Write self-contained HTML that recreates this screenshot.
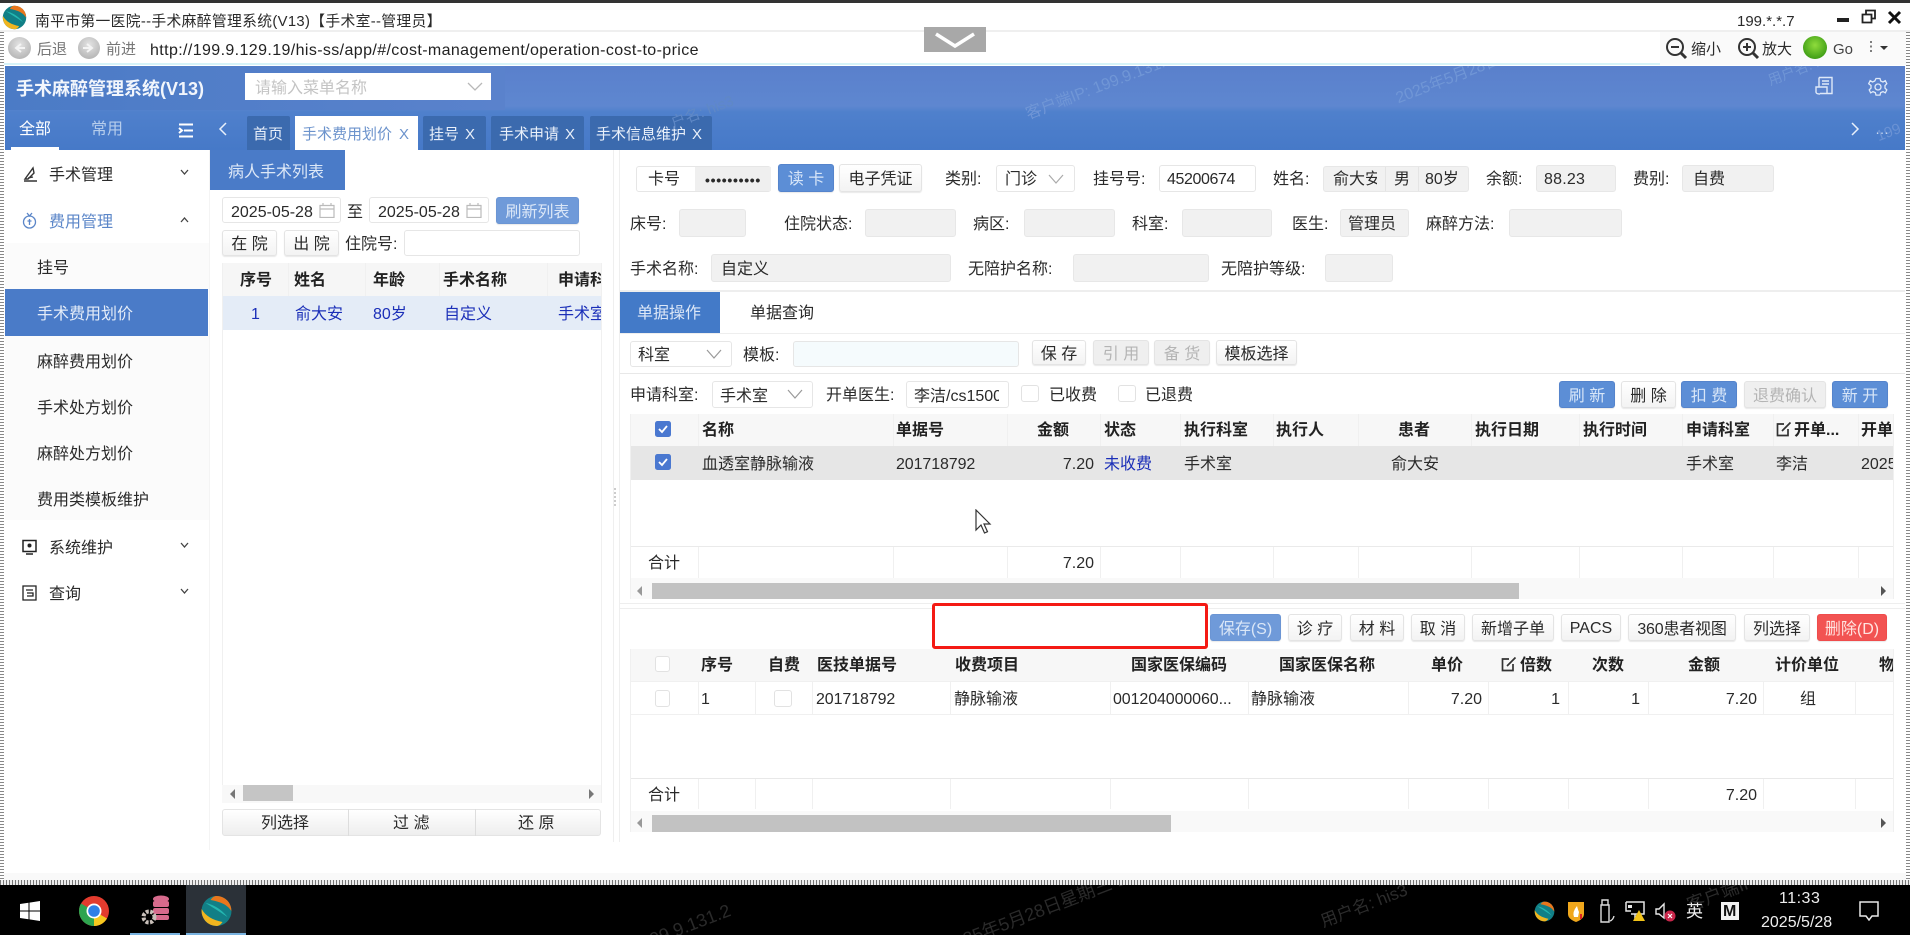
<!DOCTYPE html>
<html lang="zh-CN"><head><meta charset="utf-8"><title>手术麻醉管理系统</title>
<style>
html,body{margin:0;padding:0;width:1910px;height:935px;overflow:hidden;background:#fff}
body{position:relative;font-family:"Liberation Sans","Noto Sans CJK SC",sans-serif;font-size:16px;color:#2a2a2a;filter:blur(.35px)}
div,span,svg{box-sizing:border-box}
.t{position:absolute;white-space:nowrap;line-height:20px;height:20px;margin-top:3.5px}
.s{font-size:15px}
.th{font-weight:700;color:#222}
.w{color:#fff}
.bl{color:#1b2fb8}
.r{text-align:right}
.c{overflow:hidden}
.a{position:absolute}
.b{position:absolute;border:1px solid #e6e6e6;border-radius:3px;background:#fff}
.g{background:#f1f1f1;border-color:#e7e7e7}
.btn{position:absolute;display:flex;align-items:center;justify-content:center;border:1px solid #e4e4e4;border-radius:3px;background:linear-gradient(#fff,#f3f3f3);white-space:nowrap;box-shadow:0 1px 1px #e8e8e8;padding-bottom:1.5px}
.pr{background:#5c8ed6;border-color:#5584cc;color:#d8e6f8}
.lb{background:#6f9ad9;border-color:#6b95d4;color:#dbe7f7}
.dis{background:#efefef;color:#b4b4b4}
.tab{position:absolute;top:116px;height:34px;background:#3b6aae;border-radius:2px 2px 0 0}
.ck{position:absolute;border:1px solid #e2e2e2;border-radius:3px;background:#fff}
.wm{position:absolute;white-space:nowrap;font-size:17px;transform:rotate(-21deg);transform-origin:left bottom}
</style></head>
<body>
<svg width="0" height="0" style="position:absolute"><symbol id="lg" viewBox="0 0 32 32"><circle cx="16" cy="16" r="15" fill="#127f86"/><path d="M16 1a15 15 0 0 1 13 7.500c1 2 2 4.500 1.800 7.500C27 10 21 7 10 5 12 2 14 1 16 1z" fill="#e9761c"/><path d="M1.200 14C5 21 12 25 22 27c-2 3-4 4-6 4A15 15 0 0 1 1.200 14z" fill="#f1b51f"/><path d="M5 8c6 1 15 5 22 14-3-2-12-8-22-14z" fill="#23b7b1"/></symbol></svg>

<!-- window chrome -->
<div class="a" style="left:0;top:0;width:1910px;height:3px;background:#333"></div>
<div class="a" style="left:0;top:30px;width:1910px;height:2px;background:#efefef"></div>
<div class="a" style="left:0;top:63px;width:1660px;height:2px;background:#d6f3f8"></div>
<div class="a" style="left:1660px;top:32px;width:246px;height:33px;background:#fafafa"></div>
<svg class="a" style="left:2px;top:5px" width="25" height="25"><use href="#lg"/></svg>
<div class="t" style="left:35px;top:8px;font-size:14.8px;letter-spacing:.33px">南平市第一医院--手术麻醉管理系统(V13)【手术室--管理员】</div>
<div class="a" style="left:8px;top:37px;width:23px;height:22px;border-radius:50%;background:radial-gradient(circle at 50% 35%,#e4e4e4,#a9a9a9)"></div>
<svg class="a" style="left:8px;top:37px" width="23" height="22"><path d="M13 7l-5 4 5 4M8 11h9" fill="none" stroke="#f4f4f4" stroke-width="2"/></svg>
<div class="t" style="left:37px;top:36px;font-size:15px;color:#777">后退</div>
<div class="a" style="left:78px;top:37px;width:22px;height:22px;border-radius:50%;background:radial-gradient(circle at 50% 35%,#e4e4e4,#a9a9a9)"></div>
<svg class="a" style="left:78px;top:37px" width="22" height="22"><path d="M9 7l5 4-5 4M14 11H5" fill="none" stroke="#f4f4f4" stroke-width="2"/></svg>
<div class="t" style="left:106px;top:36px;font-size:15px;color:#777">前进</div>
<div class="t" style="left:150px;top:37px;font-size:16px;letter-spacing:.385px;color:#222">http://199.9.129.19/his-ss/app/#/cost-management/operation-cost-to-price</div>
<div class="a" style="left:924px;top:27px;width:62px;height:25px;background:#a8a8a8"></div>
<svg class="a" style="left:924px;top:27px" width="62" height="25"><path d="M12 7l19 12L50 7" fill="none" stroke="#fff" stroke-width="3.500"/></svg>
<div class="t" style="left:1737px;top:8px;font-size:15px">199.*.*.7</div>
<div class="a" style="left:1837px;top:18px;width:12px;height:4px;background:#222"></div>
<svg class="a" style="left:1860px;top:8px" width="46" height="18"><path d="M2.500 6.500h9v8h-9zM6 6V2.500h9v8h-3" fill="none" stroke="#222" stroke-width="1.800"/><path d="M29 4l11 11M40 4L29 15" stroke="#111" stroke-width="3" fill="none"/></svg>
<svg class="a" style="left:1664px;top:37px" width="100" height="23"><g fill="none" stroke="#333" stroke-width="2"><circle cx="11" cy="10" r="8"/><path d="M17 16l5 5" stroke-width="3"/><path d="M7 10h8"/><circle cx="83" cy="10" r="8"/><path d="M89 16l5 5" stroke-width="3"/><path d="M79 10h8M83 6v8"/></g></svg>
<div class="t" style="left:1691px;top:36px;font-size:15px">缩小</div>
<div class="t" style="left:1762px;top:36px;font-size:15px">放大</div>
<div class="a" style="left:1803px;top:36px;width:24px;height:23px;border-radius:50%;background:radial-gradient(circle at 50% 40%,#8fdc3c,#3f9e16 75%)"></div>
<div class="t" style="left:1833px;top:36px;font-size:15px;color:#444">Go</div>
<svg class="a" style="left:1866px;top:40px" width="24" height="14"><path d="M5 1v2M5 5.500v2M5 10v2" stroke="#555" stroke-width="1.500"/><path d="M14 6h8l-4 4z" fill="#333"/></svg>

<!-- dotted borders -->
<div class="a" style="left:0;top:32px;width:4px;height:853px;background:repeating-linear-gradient(#888 0 1px,#fff 1px 3px)"></div>
<div class="a" style="left:1906px;top:32px;width:4px;height:853px;background:repeating-linear-gradient(#888 0 1px,#fff 1px 3px)"></div>
<div class="a" style="left:4px;top:873px;width:1902px;height:7px;background:#f9f9f9"></div>
<div class="a" style="left:0;top:880px;width:1910px;height:5px;background:repeating-linear-gradient(90deg,#777 0 1px,#eee 1px 3px)"></div>

<!-- header -->
<div class="a" style="left:5px;top:66px;width:1900px;height:84px;background:linear-gradient(#5a80cc,#5e87d0 40px,#4f80cc 46px,#4679c8)"></div>
<div class="a" style="left:5px;top:66px;width:500px;height:44px;background:linear-gradient(90deg,#4b7bc6,#5a82cc)"></div>
<div class="a" style="left:0;top:66px;width:1905px;height:84px;overflow:hidden">
<div class="wm" style="left:1030px;top:34px;font-size:16px;color:#7096d6">客户端IP: 199.9.131.2</div>
<div class="wm" style="left:1400px;top:18px;color:#7096d6;font-size:16px">2025年5月28日星期三</div>
<div class="wm" style="left:1772px;top:4px;color:#7096d6;font-size:14px">用户名: his3</div>
<div class="wm" style="left:1880px;top:62px;color:#6a92d4;font-size:15px">199</div>
</div>
<div class="t" style="left:16px;top:75px;font-size:18px;font-weight:700;color:#f2f6fc">手术麻醉管理系统(V13)</div>
<div class="a" style="left:245px;top:73px;width:246px;height:27px;background:#fff"></div>
<div class="t" style="left:255px;top:75px;color:#c4c4c4">请输入菜单名称</div>
<svg class="a" style="left:467px;top:82px" width="16" height="10"><path d="M1 1l7 7 7-7" fill="none" stroke="#b8b8b8" stroke-width="1.300"/></svg>
<div class="t w" style="left:19px;top:116px">全部</div>
<div class="t" style="left:91px;top:116px;color:#b6cdec">常用</div>
<div class="a" style="left:11px;top:147px;width:48px;height:3px;background:#fff"></div>
<svg class="a" style="left:178px;top:123px" width="16" height="15"><path d="M1 1.500h14M6 7.500h9M1 13.500h14M1 5l3 2.500L1 10" fill="none" stroke="#fff" stroke-width="2"/></svg>
<svg class="a" style="left:218px;top:122px" width="10" height="14"><path d="M8 1L2 7l6 6" fill="none" stroke="#e8f0fb" stroke-width="1.500"/></svg>
<div class="tab" style="left:247px;width:43px"></div>
<div class="t s" style="left:253px;top:121px;color:#e9f0fa">首页</div>
<div class="a" style="left:295px;top:116px;width:123px;height:34px;background:#fff"></div>
<div class="t s" style="left:302px;top:121px;color:#6c93cc">手术费用划价</div>
<div class="t s" style="left:399px;top:121px;color:#6c93cc">X</div>
<div class="tab" style="left:423px;width:63px"></div>
<div class="t s" style="left:429px;top:121px;color:#e9f0fa">挂号</div>
<div class="t s" style="left:465px;top:121px;color:#e9f0fa">X</div>
<div class="tab" style="left:491px;width:93px"></div>
<div class="t s" style="left:499px;top:121px;color:#e9f0fa">手术申请</div>
<div class="t s" style="left:565px;top:121px;color:#e9f0fa">X</div>
<div class="tab" style="left:590px;width:122px"></div>
<div class="t s" style="left:596px;top:121px;color:#e9f0fa">手术信息维护</div>
<div class="t s" style="left:692px;top:121px;color:#e9f0fa">X</div>
<div class="wm" style="left:675px;top:112px;color:#5f88c6;font-size:15px">户名: his3</div>
<svg class="a" style="left:1850px;top:122px" width="10" height="14"><path d="M2 1l6 6-6 6" fill="none" stroke="#e8f0fb" stroke-width="1.500"/></svg>
<div class="t" style="left:1875px;top:115px;color:#c8d8f0;font-size:14px">…</div>
<svg class="a" style="left:1814px;top:76px" width="22" height="21"><path d="M5 1.500h13v16H6M5 1.500V11H2v5q0 2 4 2M5 11h8v6M8 5h7M8 8h7" fill="none" stroke="#dfe9f8" stroke-width="1.400"/></svg>
<svg class="a" style="left:1868px;top:77px" width="20" height="20"><path d="M8 1.500h4l.7 2.500 2.300 1 2.300-1.300 1.500 3-1.800 1.800v2.600l1.800 1.800-1.500 3-2.300-1.300-2.300 1-.7 2.500H8l-.7-2.500-2.300-1-2.300 1.300-1.500-3 1.800-1.800V8.500L.7 6.700l1.500-3L4.500 5l2.300-1z" fill="none" stroke="#dfe9f8" stroke-width="1.300"/><circle cx="10" cy="10" r="3" fill="none" stroke="#dfe9f8" stroke-width="1.300"/></svg>

<!-- sidebar -->
<div class="a" style="left:209px;top:150px;width:1px;height:700px;background:#f4f4f4"></div>
<svg class="a" style="left:22px;top:166px" width="16" height="16"><path d="M2 15h13M3 13L11 2l1 5-6 6zM6 12l5-1" fill="none" stroke="#333" stroke-width="1.400"/></svg>
<div class="t" style="left:49px;top:162px">手术管理</div>
<svg class="a" style="left:180px;top:169px" width="9" height="7"><path d="M1 1l3.500 4L8 1" fill="none" stroke="#444" stroke-width="1.300"/></svg>
<svg class="a" style="left:22px;top:212px" width="15" height="17"><circle cx="7.500" cy="10" r="6" fill="none" stroke="#5b86c8" stroke-width="1.300"/><path d="M5 1l2.500 3L10 1M7.500 7v6M5.500 9h4" fill="none" stroke="#5b86c8" stroke-width="1.300"/></svg>
<div class="t" style="left:49px;top:209px;color:#5b86c8">费用管理</div>
<svg class="a" style="left:180px;top:216px" width="9" height="7"><path d="M1 6l3.500-4L8 6" fill="none" stroke="#444" stroke-width="1.300"/></svg>
<div class="a" style="left:5px;top:243px;width:204px;height:46px;background:#fbfbfb"></div>
<div class="t" style="left:37px;top:255px">挂号</div>
<div class="a" style="left:5px;top:289px;width:203px;height:47px;background:#4a7bc8"></div>
<div class="t" style="left:37px;top:301px;color:#e4ecf8">手术费用划价</div>
<div class="a" style="left:5px;top:336px;width:204px;height:184px;background:#fbfbfb"></div>
<div class="t" style="left:37px;top:349px">麻醉费用划价</div>
<div class="t" style="left:37px;top:395px">手术处方划价</div>
<div class="t" style="left:37px;top:441px">麻醉处方划价</div>
<div class="t" style="left:37px;top:487px">费用类模板维护</div>
<svg class="a" style="left:22px;top:539px" width="15" height="16"><path d="M1 1.500h13v11H1zM4 15h7" fill="none" stroke="#222" stroke-width="1.500"/><circle cx="7.500" cy="6.500" r="2" fill="#222"/></svg>
<div class="t" style="left:49px;top:535px">系统维护</div>
<svg class="a" style="left:180px;top:542px" width="9" height="7"><path d="M1 1l3.500 4L8 1" fill="none" stroke="#444" stroke-width="1.300"/></svg>
<svg class="a" style="left:22px;top:585px" width="15" height="16"><path d="M1 1h13v14H1zM4 5h7M5 8h6v3H5" fill="none" stroke="#222" stroke-width="1.300"/></svg>
<div class="t" style="left:49px;top:581px">查询</div>
<svg class="a" style="left:180px;top:588px" width="9" height="7"><path d="M1 1l3.500 4L8 1" fill="none" stroke="#444" stroke-width="1.300"/></svg>

<!-- left list panel -->
<div class="a" style="left:210px;top:150px;width:135px;height:40px;background:#4a7bc8"></div>
<div class="t" style="left:228px;top:159px;color:#dde8f7">病人手术列表</div>
<div class="b" style="left:222px;top:197px;width:119px;height:26px"></div>
<div class="t" style="left:231px;top:199px">2025-05-28</div>
<svg class="a" style="left:319px;top:203px" width="16" height="15"><path d="M1 2.500h14v12H1zM1 6h14M4 0v3M12 0v3" fill="none" stroke="#bbb" stroke-width="1.200"/></svg>
<div class="t" style="left:347px;top:199px">至</div>
<div class="b" style="left:369px;top:197px;width:120px;height:26px"></div>
<div class="t" style="left:378px;top:199px">2025-05-28</div>
<svg class="a" style="left:466px;top:203px" width="16" height="15"><path d="M1 2.500h14v12H1zM1 6h14M4 0v3M12 0v3" fill="none" stroke="#bbb" stroke-width="1.200"/></svg>
<div class="btn lb" style="left:496px;top:197px;width:83px;height:27px">刷新列表</div>
<div class="btn" style="left:222px;top:230px;width:55px;height:26px">在 院</div>
<div class="btn" style="left:284px;top:230px;width:55px;height:26px">出 院</div>
<div class="t" style="left:345px;top:231px">住院号:</div>
<div class="b" style="left:404px;top:230px;width:176px;height:26px"></div>
<div class="a" style="left:222px;top:263px;width:379px;height:33px;background:#f6f6f6"></div>
<div class="a" style="left:222px;top:296px;width:379px;height:34px;background:#e4ecf7"></div>
<div class="a" style="left:222px;top:263px;width:1px;height:540px;background:#f0f0f0"></div>
<div class="a" style="left:601px;top:263px;width:1px;height:540px;background:#f0f0f0"></div>
<div class="t th" style="left:240px;top:267px">序号</div>
<div class="t th" style="left:294px;top:267px">姓名</div>
<div class="t th" style="left:373px;top:267px">年龄</div>
<div class="t th" style="left:443px;top:267px">手术名称</div>
<div class="t th c" style="left:558px;top:267px;width:43px">申请科室</div>
<div class="t bl" style="left:251px;top:301px">1</div>
<div class="t bl" style="left:295px;top:301px">俞大安</div>
<div class="t bl" style="left:373px;top:301px">80岁</div>
<div class="t bl" style="left:444px;top:301px">自定义</div>
<div class="t bl c" style="left:558px;top:301px;width:43px">手术室</div>
<div class="a" style="left:222px;top:785px;width:379px;height:18px;background:#f8f8f8"></div>
<div class="a" style="left:243px;top:785px;width:50px;height:16px;background:#c5c5c5"></div>
<svg class="a" style="left:228px;top:788px" width="368" height="12"><path d="M7 1L2 6l5 5zM361 1l5 5-5 5z" fill="#777"/></svg>
<div class="a" style="left:222px;top:809px;width:379px;height:27px;border:1px solid #e4e4e4;border-radius:3px;background:linear-gradient(#fff,#eee)"></div>
<div class="a" style="left:348px;top:809px;width:1px;height:27px;background:#ddd"></div>
<div class="a" style="left:475px;top:809px;width:1px;height:27px;background:#ddd"></div>
<div class="t" style="left:261px;top:810px">列选择</div>
<div class="t" style="left:393px;top:810px">过 滤</div>
<div class="t" style="left:518px;top:810px">还 原</div>
<div class="a" style="left:613px;top:150px;width:1px;height:692px;background:#efefef"></div>
<div class="a" style="left:619px;top:150px;width:1px;height:692px;background:#efefef"></div>
<div class="a" style="left:614px;top:488px;width:2px;height:18px;background:repeating-linear-gradient(#ccc 0 2px,#fff 2px 4px)"></div>

<!-- patient form -->
<div class="b" style="left:636px;top:166px;width:135px;height:26px"></div>
<div class="a g" style="left:695px;top:167px;width:76px;height:24px;background:#efefef"></div>
<div class="t" style="left:648px;top:166px">卡号</div>
<div class="t" style="left:705px;top:166px;letter-spacing:.7px;font-size:14px;font-weight:700">••••••••••</div>
<div class="btn pr" style="left:778px;top:164px;width:56px;height:28px">读 卡</div>
<div class="btn" style="left:839px;top:164px;width:83px;height:28px">电子凭证</div>
<div class="t" style="left:945px;top:166px">类别:</div>
<div class="b" style="left:996px;top:165px;width:79px;height:27px"></div>
<div class="t" style="left:1005px;top:166px">门诊</div>
<svg class="a" style="left:1048px;top:174px" width="16" height="10"><path d="M1 1l7 8 7-8" fill="none" stroke="#aaa" stroke-width="1.200"/></svg>
<div class="t" style="left:1093px;top:166px">挂号号:</div>
<div class="b" style="left:1159px;top:165px;width:97px;height:27px"></div>
<div class="t" style="left:1167px;top:166px;letter-spacing:-.4px">45200674</div>
<div class="t" style="left:1273px;top:166px">姓名:</div>
<div class="b g" style="left:1323px;top:166px;width:146px;height:26px"></div>
<div class="a" style="left:1385px;top:167px;width:1px;height:24px;background:#e4e4e4"></div>
<div class="a" style="left:1418px;top:167px;width:1px;height:24px;background:#e4e4e4"></div>
<div class="t c" style="left:1333px;top:166px;width:44px">俞大安</div>
<div class="t" style="left:1394px;top:166px">男</div>
<div class="t" style="left:1425px;top:166px">80岁</div>
<div class="t" style="left:1486px;top:166px">余额:</div>
<div class="b g" style="left:1536px;top:165px;width:80px;height:27px"></div>
<div class="t" style="left:1544px;top:166px;letter-spacing:.2px">88.23</div>
<div class="t" style="left:1633px;top:166px">费别:</div>
<div class="b g" style="left:1682px;top:165px;width:92px;height:27px"></div>
<div class="t" style="left:1693px;top:166px">自费</div>

<div class="t" style="left:630px;top:211px">床号:</div><div class="b g" style="left:679px;top:209px;width:67px;height:28px"></div>
<div class="t" style="left:784px;top:211px">住院状态:</div><div class="b g" style="left:865px;top:209px;width:91px;height:28px"></div>
<div class="t" style="left:973px;top:211px">病区:</div><div class="b g" style="left:1024px;top:209px;width:91px;height:28px"></div>
<div class="t" style="left:1132px;top:211px">科室:</div><div class="b g" style="left:1182px;top:209px;width:90px;height:28px"></div>
<div class="t" style="left:1292px;top:211px">医生:</div><div class="b g" style="left:1340px;top:209px;width:69px;height:28px"></div>
<div class="t" style="left:1348px;top:211px">管理员</div>
<div class="t" style="left:1426px;top:211px">麻醉方法:</div><div class="b g" style="left:1509px;top:209px;width:113px;height:28px"></div>

<div class="t" style="left:630px;top:256px">手术名称:</div><div class="b g" style="left:711px;top:254px;width:240px;height:28px"></div>
<div class="t" style="left:721px;top:256px">自定义</div>
<div class="t" style="left:968px;top:256px">无陪护名称:</div><div class="b g" style="left:1073px;top:254px;width:136px;height:28px"></div>
<div class="t" style="left:1221px;top:256px">无陪护等级:</div><div class="b g" style="left:1325px;top:254px;width:68px;height:28px"></div>

<div class="a" style="left:620px;top:290px;width:1285px;height:2px;background:#eee"></div>
<div class="a" style="left:620px;top:292px;width:100px;height:41px;background:#437ac8"></div>
<div class="t" style="left:637px;top:300px;color:#dce7f7">单据操作</div>
<div class="t" style="left:750px;top:300px">单据查询</div>
<div class="a" style="left:620px;top:333px;width:1285px;height:1px;background:#eee"></div>

<!-- toolbar 1 -->
<div class="b" style="left:630px;top:341px;width:102px;height:26px"></div>
<div class="t" style="left:638px;top:342px">科室</div>
<svg class="a" style="left:706px;top:349px" width="16" height="10"><path d="M1 1l7 8 7-8" fill="none" stroke="#999" stroke-width="1.200"/></svg>
<div class="t" style="left:743px;top:342px">模板:</div>
<div class="b" style="left:793px;top:341px;width:226px;height:26px;background:#f5fbfd"></div>
<div class="btn" style="left:1032px;top:340px;width:54px;height:25px">保 存</div>
<div class="btn dis" style="left:1093px;top:340px;width:56px;height:25px">引 用</div>
<div class="btn dis" style="left:1154px;top:340px;width:56px;height:25px">备 货</div>
<div class="btn" style="left:1216px;top:340px;width:81px;height:25px">模板选择</div>
<div class="a" style="left:620px;top:373px;width:1285px;height:1px;background:#e8e8e8"></div>

<!-- toolbar 2 -->
<div class="t" style="left:630px;top:382px">申请科室:</div>
<div class="b" style="left:712px;top:381px;width:101px;height:27px"></div>
<div class="t" style="left:720px;top:383px">手术室</div>
<svg class="a" style="left:787px;top:389px" width="16" height="10"><path d="M1 1l7 8 7-8" fill="none" stroke="#999" stroke-width="1.200"/></svg>
<div class="t" style="left:826px;top:382px">开单医生:</div>
<div class="b" style="left:906px;top:381px;width:103px;height:27px"></div>
<div class="t c" style="left:914px;top:383px;width:85px">李洁/cs1500</div>
<div class="ck" style="left:1021px;top:385px;width:18px;height:17px"></div>
<div class="t" style="left:1049px;top:382px">已收费</div>
<div class="ck" style="left:1118px;top:385px;width:18px;height:17px"></div>
<div class="t" style="left:1145px;top:382px">已退费</div>
<div class="btn pr" style="left:1559px;top:381px;width:56px;height:27px">刷 新</div>
<div class="btn" style="left:1621px;top:381px;width:55px;height:27px">删 除</div>
<div class="btn pr" style="left:1681px;top:381px;width:56px;height:27px">扣 费</div>
<div class="btn dis" style="left:1744px;top:381px;width:82px;height:27px">退费确认</div>
<div class="btn pr" style="left:1832px;top:381px;width:56px;height:27px">新 开</div>

<!-- table 1 -->
<div class="a" style="left:630px;top:414px;width:1263px;height:32px;background:#f7f7f7"></div>
<div class="a" style="left:630px;top:446px;width:1263px;height:34px;background:#e6e6e6"></div>
<div class="a" style="left:630px;top:546px;width:1263px;height:1px;background:#eaeaea"></div>
<div class="a" style="left:630px;top:414px;width:1px;height:185px;background:#f0f0f0"></div>
<div class="a" style="left:1893px;top:414px;width:1px;height:185px;background:#f0f0f0"></div>
<div class="a" style="left:631px;top:578px;width:1262px;height:21px;background:#f9f9f9"></div>
<div class="a" style="left:652px;top:583px;width:867px;height:16px;background:#c2c2c2"></div>
<svg class="a" style="left:636px;top:585px" width="8" height="12"><path d="M6 1L1 6l5 5z" fill="#999"/></svg>
<svg class="a" style="left:1880px;top:585px" width="8" height="12"><path d="M1 1l5 5-5 5z" fill="#555"/></svg>
<svg class="a" style="left:655px;top:421px" width="16" height="16"><rect width="16" height="16" rx="2.500" fill="#4a78d0"/><path d="M4 8l3 3 5-6" fill="none" stroke="#fff" stroke-width="1.800"/></svg>
<svg class="a" style="left:655px;top:454px" width="16" height="16"><rect width="16" height="16" rx="2.500" fill="#4a78d0"/><path d="M4 8l3 3 5-6" fill="none" stroke="#fff" stroke-width="1.800"/></svg>
<div class="t th" style="left:702px;top:417px">名称</div>
<div class="t th" style="left:896px;top:417px">单据号</div>
<div class="t th" style="left:1037px;top:417px">金额</div>
<div class="t th" style="left:1104px;top:417px">状态</div>
<div class="t th" style="left:1184px;top:417px">执行科室</div>
<div class="t th" style="left:1276px;top:417px">执行人</div>
<div class="t th" style="left:1398px;top:417px">患者</div>
<div class="t th" style="left:1475px;top:417px">执行日期</div>
<div class="t th" style="left:1583px;top:417px">执行时间</div>
<div class="t th" style="left:1686px;top:417px">申请科室</div>
<svg class="a" style="left:1776px;top:421px" width="16" height="16"><path d="M12 8v6.500H1.500V3H8M6 10L14.500 1.500" fill="none" stroke="#333" stroke-width="1.700"/></svg>
<div class="t th" style="left:1794px;top:417px">开单...</div>
<div class="t th c" style="left:1861px;top:417px;width:32px">开单</div>
<div class="t" style="left:702px;top:451px">血透室静脉输液</div>
<div class="t" style="left:896px;top:451px;letter-spacing:-.1px">201718792</div>
<div class="t r" style="left:1054px;top:451px;width:40px">7.20</div>
<div class="t bl" style="left:1104px;top:451px">未收费</div>
<div class="t" style="left:1184px;top:451px">手术室</div>
<div class="t" style="left:1391px;top:451px">俞大安</div>
<div class="t" style="left:1686px;top:451px">手术室</div>
<div class="t" style="left:1776px;top:451px">李洁</div>
<div class="t c" style="left:1861px;top:451px;width:32px">2025</div>
<svg class="a" style="left:974px;top:509px" width="18" height="26"><path d="M2 1v20l5-5 3.500 8 3-1.300L10 15h6z" fill="#fff" stroke="#333" stroke-width="1.200"/></svg>
<div class="t" style="left:648px;top:550px">合计</div>
<div class="t r" style="left:1054px;top:550px;width:40px">7.20</div>
<svg class="a" style="left:0;top:0;pointer-events:none" width="1910" height="935"><path d="M698.500 414V446M893.500 414V446M1007.500 414V446M1100.500 414V446M1180.500 414V446M1273.500 414V446M1358.500 414V446M1471.500 414V446M1579.500 414V446M1682.500 414V446M1773.500 414V446M1858.500 414V446M698.500 547V578M893.500 547V578M1007.500 547V578M1100.500 547V578M1180.500 547V578M1273.500 547V578M1358.500 547V578M1471.500 547V578M1579.500 547V578M1682.500 547V578M1773.500 547V578M1858.500 547V578M698.500 649V714M755.500 649V714M812.500 649V714M950.500 649V714M1110.500 649V714M1248.500 649V714M1408.500 649V714M1488.500 649V714M1568.500 649V714M1648.500 649V714M1763.500 649V714M1855.500 649V714M698.500 779V809M755.500 779V809M812.500 779V809M950.500 779V809M1110.500 779V809M1248.500 779V809M1408.500 779V809M1488.500 779V809M1568.500 779V809M1648.500 779V809M1763.500 779V809M1855.500 779V809M288.500 263V296M365.500 263V296M439.500 263V296M547.500 263V296" stroke="#f0f0f0" fill="none"/></svg>

<!-- splitter / red box -->
<div class="a" style="left:620px;top:603px;width:1285px;height:1px;background:#eee"></div>
<div class="a" style="left:620px;top:608px;width:1285px;height:1px;background:#eee"></div>
<div class="a" style="left:932px;top:603px;width:276px;height:46px;border:3px solid #f41a14;border-radius:3px;background:#fff"></div>

<!-- buttons 2 -->
<div class="btn lb" style="left:1210px;top:614px;width:71px;height:27px">保存(S)</div>
<div class="btn" style="left:1288px;top:614px;width:54px;height:27px">诊 疗</div>
<div class="btn" style="left:1350px;top:614px;width:54px;height:27px">材 料</div>
<div class="btn" style="left:1411px;top:614px;width:54px;height:27px">取 消</div>
<div class="btn" style="left:1472px;top:614px;width:82px;height:27px">新增子单</div>
<div class="btn" style="left:1561px;top:614px;width:60px;height:27px;padding:2px 0 0">PACS</div>
<div class="btn" style="left:1628px;top:614px;width:108px;height:27px;letter-spacing:-.2px">360患者视图</div>
<div class="btn" style="left:1744px;top:614px;width:66px;height:27px">列选择</div>
<div class="btn" style="left:1817px;top:614px;width:70px;height:27px;background:#f25352;border-color:#ef4c4c;color:#ffe4e0">删除(D)</div>

<!-- table 2 -->
<div class="a" style="left:630px;top:649px;width:1263px;height:32px;background:#f7f7f7"></div>
<div class="a" style="left:630px;top:681px;width:1263px;height:1px;background:#f0f0f0"></div>
<div class="a" style="left:630px;top:714px;width:1263px;height:1px;background:#f0f0f0"></div>
<div class="a" style="left:630px;top:778px;width:1263px;height:1px;background:#e8e8e8"></div>
<div class="a" style="left:630px;top:649px;width:1px;height:183px;background:#f0f0f0"></div>
<div class="a" style="left:1893px;top:649px;width:1px;height:183px;background:#f0f0f0"></div>
<div class="a" style="left:631px;top:811px;width:1262px;height:21px;background:#f9f9f9"></div>
<div class="a" style="left:652px;top:815px;width:519px;height:17px;background:#c2c2c2"></div>
<svg class="a" style="left:636px;top:817px" width="8" height="12"><path d="M6 1L1 6l5 5z" fill="#999"/></svg>
<svg class="a" style="left:1880px;top:817px" width="8" height="12"><path d="M1 1l5 5-5 5z" fill="#555"/></svg>
<div class="ck" style="left:655px;top:656px;width:15px;height:16px"></div>
<div class="ck" style="left:655px;top:690px;width:15px;height:17px"></div>
<div class="ck" style="left:774px;top:690px;width:18px;height:17px"></div>
<div class="t th" style="left:701px;top:652px">序号</div>
<div class="t th" style="left:768px;top:652px">自费</div>
<div class="t th" style="left:817px;top:652px">医技单据号</div>
<div class="t th" style="left:955px;top:652px">收费项目</div>
<div class="t th" style="left:1131px;top:652px">国家医保编码</div>
<div class="t th" style="left:1279px;top:652px">国家医保名称</div>
<div class="t th" style="left:1431px;top:652px">单价</div>
<svg class="a" style="left:1501px;top:656px" width="16" height="16"><path d="M12 8v6.500H1.500V3H8M6 10L14.500 1.500" fill="none" stroke="#333" stroke-width="1.700"/></svg>
<div class="t th" style="left:1520px;top:652px">倍数</div>
<div class="t th" style="left:1592px;top:652px">次数</div>
<div class="t th" style="left:1688px;top:652px">金额</div>
<div class="t th" style="left:1775px;top:652px">计价单位</div>
<div class="t th c" style="left:1879px;top:652px;width:14px">物价</div>
<div class="t" style="left:701px;top:686px">1</div>
<div class="t" style="left:816px;top:686px;letter-spacing:-.1px">201718792</div>
<div class="t" style="left:954px;top:686px">静脉输液</div>
<div class="t" style="left:1113px;top:686px;letter-spacing:-.1px">001204000060...</div>
<div class="t" style="left:1251px;top:686px">静脉输液</div>
<div class="t r" style="left:1442px;top:686px;width:40px">7.20</div>
<div class="t r" style="left:1520px;top:686px;width:40px">1</div>
<div class="t r" style="left:1600px;top:686px;width:40px">1</div>
<div class="t r" style="left:1717px;top:686px;width:40px">7.20</div>
<div class="t" style="left:1800px;top:686px">组</div>
<div class="t" style="left:648px;top:782px">合计</div>
<div class="t r" style="left:1717px;top:782px;width:40px">7.20</div>

<!-- taskbar -->
<div class="a" style="left:0;top:885px;width:1910px;height:50px;background:#000;overflow:hidden">
<div class="wm" style="left:645px;top:48px;color:#2a2a2a;font-size:18px">199.9.131.2</div>
<div class="wm" style="left:968px;top:40px;color:#2a2a2a;font-size:18px">25年5月28日星期三 10:33</div>
<div class="wm" style="left:1325px;top:22px;color:#2c2c2c;font-size:17px">用户名: his3</div>
<div class="wm" style="left:1692px;top:6px;color:#2a2a2a;font-size:18px">客户端IP: 199</div>
</div>
<svg class="a" style="left:20px;top:901px" width="20" height="20"><path d="M0 3l8.500-1.200V9.500H0zM9.500 1.600L20 0v9.500H9.500zM0 10.500h8.500v7.700L0 17zM9.500 10.500H20V20L9.500 18.400z" fill="#fff"/></svg>
<svg class="a" style="left:79px;top:896px" width="30" height="30" viewBox="0 0 30 30"><circle cx="15" cy="15" r="15" fill="#e33b2e"/><path d="M15 15L28 22.500A15 15 0 0 1 15 30z" fill="#f7c81e"/><path d="M15 15V30A15 15 0 0 1 2 7.500z" fill="#2ea44f"/><circle cx="15" cy="15" r="7.500" fill="#fff"/><circle cx="15" cy="15" r="5.800" fill="#2f7fe6"/></svg>
<svg class="a" style="left:141px;top:895px" width="29" height="31"><g fill="#d76a8c"><ellipse cx="20" cy="4" rx="8" ry="3.500"/><rect x="12" y="6" width="16" height="6" rx="2"/><rect x="12" y="13" width="16" height="6" rx="2"/><rect x="12" y="20" width="16" height="5" rx="2"/></g><circle cx="8" cy="22" r="5.500" fill="none" stroke="#c9c0ba" stroke-width="4" stroke-dasharray="3 1.500"/></svg>
<div class="a" style="left:130px;top:933px;width:50px;height:2px;background:#79b3e0"></div>
<div class="a" style="left:186px;top:885px;width:60px;height:50px;background:#2b3138"></div>
<div class="a" style="left:186px;top:933px;width:60px;height:2px;background:#79b3e0"></div>
<svg class="a" style="left:200px;top:895px" width="33" height="32"><use href="#lg"/></svg>
<svg class="a" style="left:1534px;top:901px" width="21" height="21"><use href="#lg"/></svg>
<svg class="a" style="left:1567px;top:901px" width="18" height="21"><path d="M1 1h16v12q0 5-8 8-8-3-8-8z" fill="#f0a71c"/><path d="M7 16q-2-5 3-11 1 4 2 6l-1 5z" fill="#fff"/><path d="M14 13v5" stroke="#d22" stroke-width="2"/></svg>
<svg class="a" style="left:1598px;top:899px" width="18" height="24"><path d="M3 6h8v17H3zM4 1h6v5H4zM12 22q3-1 4-5" fill="none" stroke="#ddd" stroke-width="1.400"/></svg>
<svg class="a" style="left:1625px;top:901px" width="21" height="21"><path d="M1 1h18v12H6M1 1v9h5M10 13v6" fill="none" stroke="#e6e6e6" stroke-width="1.500"/><path d="M3 4h4v3H3z" fill="#e6e6e6"/><path d="M14 9l6 11h-12z" fill="#f2c318"/></svg>
<svg class="a" style="left:1655px;top:902px" width="21" height="20"><path d="M1 7h3l5-5v14l-5-4H1z" fill="none" stroke="#e6e6e6" stroke-width="1.400"/><circle cx="15" cy="14" r="5.500" fill="#c8264a"/><path d="M13 12l4 4M17 12l-4 4" stroke="#fff" stroke-width="1.200"/></svg>
<div class="t" style="left:1686px;top:898px;color:#eee;font-size:17px">英</div>
<div class="a" style="left:1721px;top:902px;width:18px;height:18px;background:#f2f2f2"></div>
<div class="t" style="left:1723px;top:898px;color:#111;font-size:16px;font-weight:700">M</div>
<div class="t" style="left:1779px;top:885px;color:#eee;font-size:16px;letter-spacing:.5px">11:33</div>
<div class="t" style="left:1761px;top:909px;color:#eee;font-size:16px">2025/5/28</div>
<svg class="a" style="left:1859px;top:901px" width="20" height="20"><path d="M1 1h18v14h-6l-3 4-3-4H1z" fill="none" stroke="#e8e8e8" stroke-width="1.500"/></svg>
</body></html>
